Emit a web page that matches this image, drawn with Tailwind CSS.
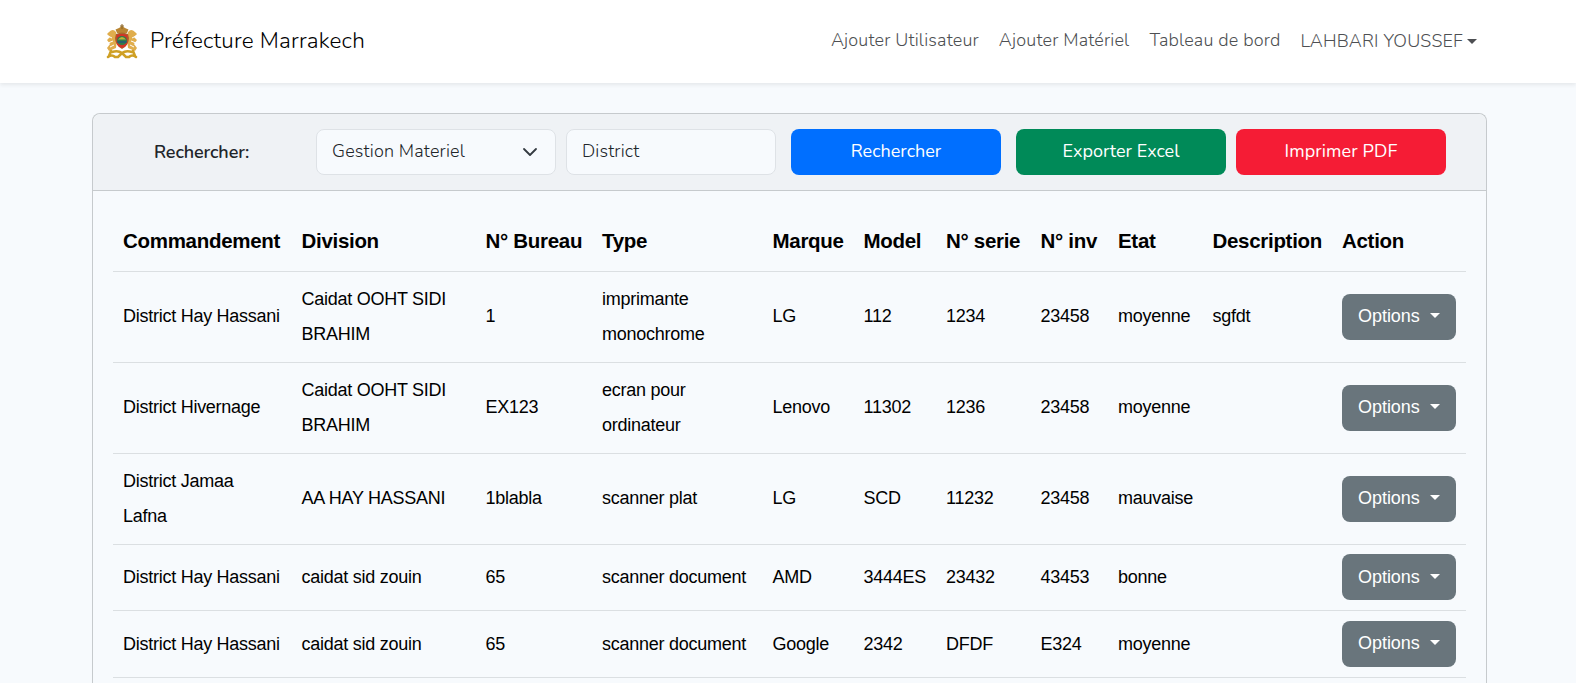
<!DOCTYPE html>
<html lang="fr">
<head>
<meta charset="utf-8">
<title>Préfecture Marrakech</title>
<script src="https://cdn.jsdelivr.net/npm/@tailwindcss/browser@4"></script>
</head>
<body class="h-[683px] overflow-hidden bg-[#f7fafd] font-[Nunito,Lato,sans-serif] text-[18px] text-[#212529]">
<header class="h-[83px] bg-white shadow-[0_2px_4px_rgba(0,0,0,0.075)] flex items-center justify-between pl-[106px] pr-[99px]">
  <a class="flex items-center text-black">
    <svg class="w-8 h-9 shrink-0" viewBox="0 0 32 36">
      <g fill="#e0ad4c">
        <path d="M3 8q4-4 7 0l1 7-1 9-7 3-2-3 3-4-3-4 3-3-3-3zM29 8q-4-4-7 0l-1 7 1 9 7 3 2-3-3-4 3-4-3-3 3-3z"/>
      </g>
      <path d="M2 12l4 2M2 19l5-2M4 23l4-2M30 12l-4 2M30 19l-5-2M28 23l-4-2" stroke="#fff" stroke-width="1" fill="none"/>
      <g fill="none" stroke="#cfa024" stroke-width="2.600" stroke-linecap="round">
        <path d="M6 28q6-2 10 1q4-3 10-1M2 33q4-3 7 0h3l4-4 4 4h3q3-3 7 0M5 27l-2 5M27 27l2 5"/>
      </g>
      <path d="M11 9 9.500 5.500 13 4l3-2 3 2 3.500 1.500L21 9z" fill="#b98532"/>
      <path d="M16 0v5M14 2h4" stroke="#8a6426" stroke-width="1"/>
      <path d="M10 10q6-3 12 0l1 4q0 7-7 11-7-4-7-11z" fill="#a8662c"/>
      <path d="M10.500 11q5.500-2 11 0v8q-1 4-5.500 5-4.500-1-5.500-5z" fill="#d33427"/>
      <ellipse cx="16" cy="16.500" rx="5" ry="4.500" fill="#2f7d4b"/>
      <path d="M12 15.500q4-5 8 0z" fill="#bdb43a"/>
      <path d="M11.500 17h9v2h-9z" fill="#28606e"/>
    </svg>
    <span class="ml-3 -mt-px text-[22.5px] tracking-[0.22px] font-light">Préfecture Marrakech</span>
  </a>
  <nav class="flex items-center gap-5 font-light tracking-[0.17px] text-[#4d4f52]">
    <a class="-mt-0.5">Ajouter Utilisateur</a>
    <a class="-mt-0.5">Ajouter Matériel</a>
    <a class="-mt-0.5">Tableau de bord</a>
    <a class="flex items-center gap-1">LAHBARI YOUSSEF<i class="border-x-[5px] border-t-[5px] border-x-transparent border-t-[#4d4f52]"></i></a>
  </nav>
</header>
<main class="mt-[30px] ml-[92px] w-[1395px] h-[570px] overflow-hidden rounded-t-lg border border-b-0 border-[#c6cacd]">
  <div class="h-[77px] rounded-t-lg border-b border-[#c6cacd] bg-[#eff2f5] flex items-center">
    <div class="w-[223px] pl-[61px] font-semibold tracking-[-0.1px]">Rechercher:</div>
    <div class="w-60 h-[46px] rounded-lg border border-[#dee2e6] bg-[#f7fafd] flex items-center justify-between px-[15px] font-light tracking-[0.16px]"><span class="-mt-0.5">Gestion Materiel</span>
      <svg class="w-4 h-4 mr-0.5" viewBox="0 0 16 16" fill="none" stroke="#343a40" stroke-width="1.800" stroke-linecap="round" stroke-linejoin="round"><path d="m2 5 6 6 6-6"/></svg></div>
    <div class="ml-2.5 w-[210px] h-[46px] rounded-lg border border-[#dee2e6] bg-[#f7fafd] flex items-center px-[15px] pb-0.5 font-light tracking-[0.16px]">District</div>
    <button class="ml-[15px] w-[210px] h-[46px] pb-0.5 rounded-lg bg-[#006fff] text-white">Rechercher</button>
    <button class="ml-[15px] w-[210px] h-[46px] pb-0.5 rounded-lg bg-[#008a58] text-white">Exporter Excel</button>
    <button class="ml-2.5 w-[210px] h-[46px] pb-0.5 rounded-lg bg-[#f51c35] text-white tracking-[0.1px]">Imprimer PDF</button>
  </div>
  <table class="mt-5 ml-5 w-[1353px] table-fixed border-collapse text-left text-black font-['Liberation_Sans',Arial,sans-serif] leading-[35px] tracking-[-0.26px]">
    <colgroup><col class="w-[178.500px]"><col class="w-[184px]"><col class="w-[116.500px]"><col class="w-[170.500px]"><col class="w-[91px]"><col class="w-[82.500px]"><col class="w-[94.500px]"><col class="w-[77.500px]"><col class="w-[94.500px]"><col class="w-[129.500px]"><col></colgroup>
    <thead><tr class="h-[60px] border-b border-[#dbdfe2] text-[20.5px] tracking-[-0.3px] whitespace-nowrap [&>th]:px-2.5 [&>th]:pb-px"><th>Commandement</th><th>Division</th><th>N° Bureau</th><th>Type</th><th>Marque</th><th>Model</th><th>N° serie</th><th>N° inv</th><th>Etat</th><th>Description</th><th>Action</th></tr></thead>
    <tbody id="rows" class="[&_td]:px-2.5 [&_td]:align-middle [&>tr]:border-b [&>tr]:border-[#dbdfe2] [&>tr:last-child>td>div]:pt-0.5"></tbody>
  </table>
</main>
<script>
const rows = [
  ['h-[91px]','District Hay Hassani','Caidat OOHT SIDI<br>BRAHIM','1','imprimante<br>monochrome','LG','112','1234','23458','moyenne','sgfdt'],
  ['h-[91px]','District Hivernage','Caidat OOHT SIDI<br>BRAHIM','EX123','ecran pour<br>ordinateur','Lenovo','11302','1236','23458','moyenne',''],
  ['h-[91px]','District Jamaa<br>Lafna','AA HAY HASSANI','1blabla','scanner plat','LG','SCD','11232','23458','mauvaise',''],
  ['h-[66px]','District Hay Hassani','caidat sid zouin','65','scanner document','AMD','3444ES','23432','43453','bonne',''],
  ['h-[67px]','District Hay Hassani','caidat sid zouin','65','scanner document','Google','2342','DFDF','E324','moyenne','']
];
const button = '<button class="flex items-center w-[114px] h-[46px] pl-4 rounded-lg bg-[#69757c] text-white tracking-[-0.04px]">Options<i class="ml-2.5 -mt-0.5 border-x-[5px] border-t-[5px] border-x-transparent border-t-white"></i></button>';
document.getElementById('rows').innerHTML = rows.map(([h, ...cells]) =>
  `<tr class="${h}">` + cells.map(c => `<td><div class="whitespace-nowrap">${c}</div></td>`).join('') + `<td>${button}</td></tr>`).join('');
</script>
</body>
</html>
